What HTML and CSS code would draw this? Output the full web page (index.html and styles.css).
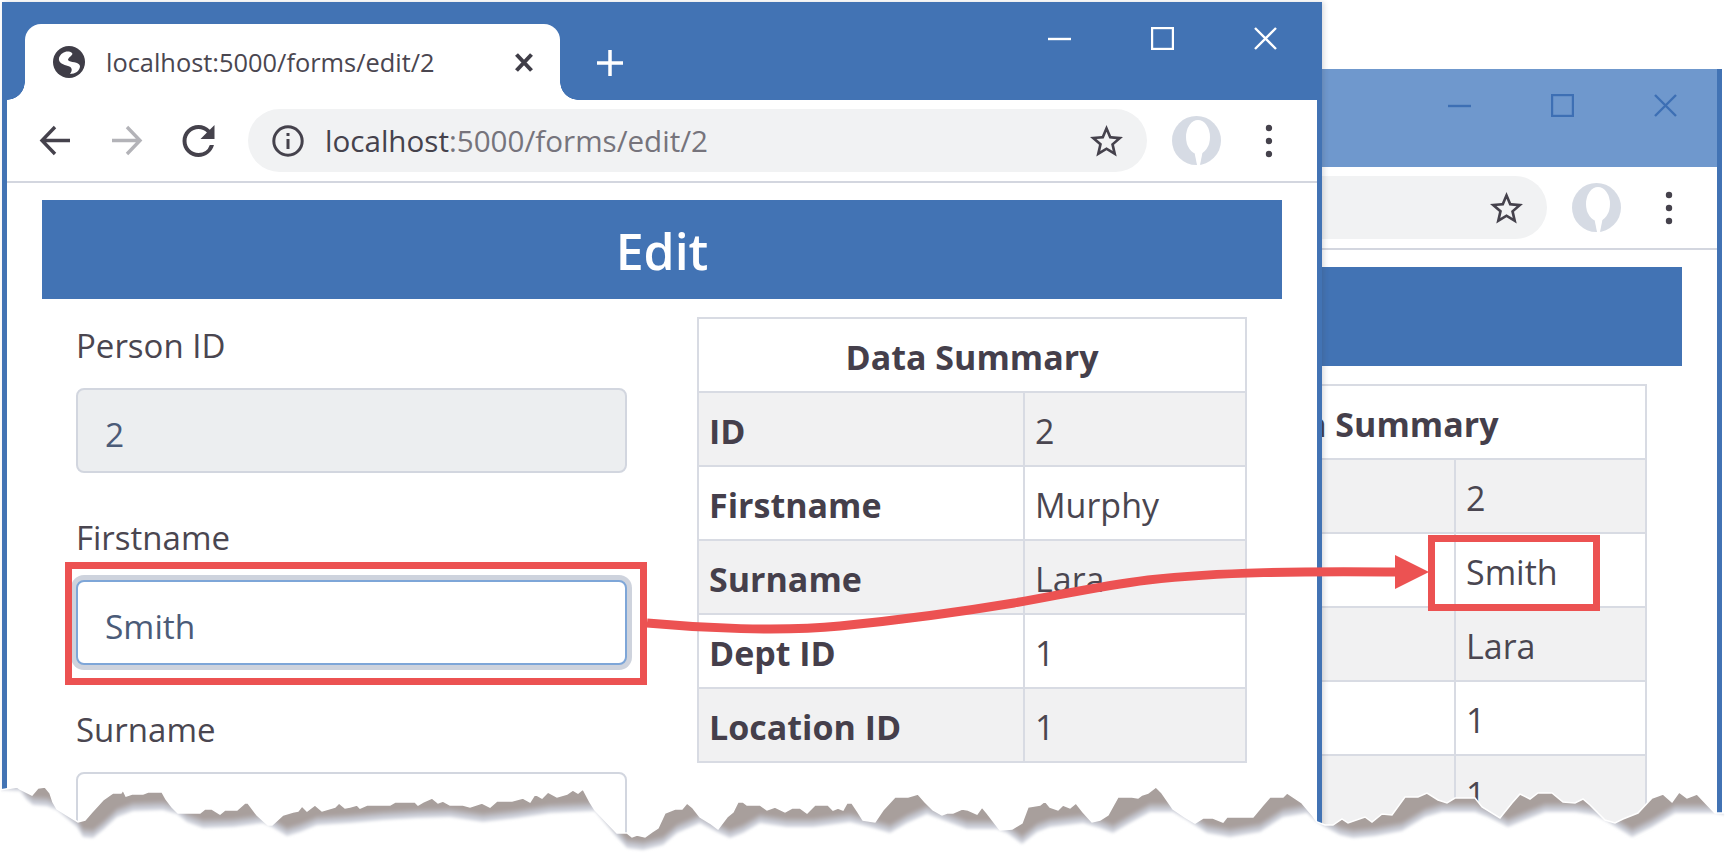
FILE: index.html
```html
<!DOCTYPE html>
<html lang="en">

<head>
	<meta charset="UTF-8">
	<title>localhost:5000/forms/edit/2</title>
	<link rel="stylesheet" href="styles.css">
</head>

<body>
	<svg class="icon-defs">
		<symbol id="i-min" viewBox="0 0 23 23"><path d="M0 12H23" /></symbol>
		<symbol id="i-max" viewBox="0 0 23 23"><rect x="1" y="1" width="21" height="21" /></symbol>
		<symbol id="i-close" viewBox="0 0 23 23"><path d="M1 1L22 22M22 1L1 22" /></symbol>
		<symbol id="i-star" viewBox="2 2 20 19.3"><path d="M22 9.24l-7.19-.62L12 2 9.19 8.63 2 9.24l5.46 4.73L5.82 21 12 17.27 18.18 21l-1.63-7.03L22 9.24zM12 15.4l-3.76 2.27 1-4.28-3.32-2.88 4.38-.38L12 6.1l1.71 4.04 4.38.38-3.32 2.88 1 4.28L12 15.4z" /></symbol>
		<symbol id="i-avatar" viewBox="0 0 49 49">
			<circle cx="24.5" cy="24.5" r="24.5" fill="#d6dbe4" />
			<ellipse cx="26" cy="21" rx="12" ry="17" fill="#fff" />
			<path d="M22 34H31L28 49H25Z" fill="#fff" />
		</symbol>
		<symbol id="i-dots" viewBox="0 0 8 34">
			<circle cx="4" cy="4" r="3.2" />
			<circle cx="4" cy="17" r="3.2" />
			<circle cx="4" cy="30" r="3.2" />
		</symbol>
	</svg>

	<!-- back window -->
	<div class="window window-back">
		<div class="titlebar">
			<div class="controls">
				<svg class="ctl"><use href="#i-min" /></svg>
				<svg class="ctl"><use href="#i-max" /></svg>
				<svg class="ctl"><use href="#i-close" /></svg>
			</div>
		</div>
		<div class="toolbar">
			<div class="omnibox"><svg class="star"><use href="#i-star" /></svg></div>
			<svg class="avatar"><use href="#i-avatar" /></svg>
			<svg class="dots"><use href="#i-dots" /></svg>
		</div>
		<div class="banner"></div>
		<div class="content">
			<table class="summary">
				<colgroup><col class="col-wide"><col></colgroup>
				<tr><th colspan="2" class="title">Data Summary</th></tr>
				<tr class="odd"><th></th><td>2</td></tr>
				<tr><th></th><td>Smith</td></tr>
				<tr class="odd"><th></th><td>Lara</td></tr>
				<tr><th></th><td>1</td></tr>
				<tr class="odd"><th></th><td>1</td></tr>
			</table>
		</div>
	</div>

	<!-- front window -->
	<div class="window window-front">
		<div class="titlebar">
			<div class="tab">
				<svg class="globe" viewBox="0 0 32 32">
					<circle cx="16" cy="16" r="16" fill="#3f3d47" />
					<path d="M6 12C8 6 15 4 19 7C21 9 15 11 15 14C17 17 26 15 27 20C27 25 22 28 17 28C20 24 19 21 15 20C11 19 5 17 6 12Z" fill="#fff" />
				</svg>
				<span class="tab-title">localhost:5000/forms/edit/2</span>
				<svg class="tab-close" viewBox="0 0 18 19"><path d="M1.5 1.5L16.5 17.5M16.5 1.5L1.5 17.5" /></svg>
			</div>
			<svg class="new-tab" viewBox="0 0 26 26"><path d="M13 0V26M0 13H26" /></svg>
			<div class="controls">
				<svg class="ctl"><use href="#i-min" /></svg>
				<svg class="ctl"><use href="#i-max" /></svg>
				<svg class="ctl"><use href="#i-close" /></svg>
			</div>
		</div>
		<div class="toolbar">
			<svg class="nav" viewBox="0 0 31 31"><path d="M31 15.5H4M16 2L3 15.5L16 29" /></svg>
			<svg class="nav nav-off" viewBox="0 0 31 31"><path d="M0 15.5H27M15 2L28 15.5L15 29" /></svg>
			<svg class="reload" viewBox="4 4 16 16"><path d="M17.65 6.35A7.958 7.958 0 0 0 12 4c-4.42 0-7.99 3.58-7.99 8s3.57 8 7.99 8c3.73 0 6.84-2.55 7.73-6h-2.08A5.99 5.99 0 0 1 12 18c-3.31 0-6-2.69-6-6s2.69-6 6-6c1.66 0 3.14.69 4.22 1.78L13 11h7V4l-2.35 2.35z" /></svg>
			<div class="omnibox">
				<svg class="info" viewBox="0 0 32 32">
					<circle cx="16" cy="16" r="14.2" />
					<path d="M16 14V24M16 8V11" />
				</svg>
				<span class="url"><b>localhost</b>:5000/forms/edit/2</span>
				<svg class="star"><use href="#i-star" /></svg>
			</div>
			<svg class="avatar"><use href="#i-avatar" /></svg>
			<svg class="dots"><use href="#i-dots" /></svg>
		</div>
		<div class="banner">Edit</div>
		<div class="content">
			<form class="edit-form">
				<label for="pid">Person ID</label>
				<input id="pid" type="text" value="2" disabled>
				<label for="fname">Firstname</label>
				<input id="fname" class="focused" type="text" value="Smith">
				<label for="sname">Surname</label>
				<input id="sname" type="text">
			</form>
			<table class="summary">
				<colgroup><col class="col-narrow"><col></colgroup>
				<tr><th colspan="2" class="title">Data Summary</th></tr>
				<tr class="odd"><th>ID</th><td>2</td></tr>
				<tr><th>Firstname</th><td>Murphy</td></tr>
				<tr class="odd"><th>Surname</th><td>Lara</td></tr>
				<tr><th>Dept ID</th><td>1</td></tr>
				<tr class="odd"><th>Location ID</th><td>1</td></tr>
			</table>
		</div>
	</div>

	<!-- torn edge and red callouts sit over both windows -->
	<svg class="overlay" viewBox="0 0 1725 859">
		<defs>
			<polygon id="tear" points="0,790 17,787 20,789 32,795 38,788 45,787 50,793 53,802 57,809 78,822 85,820 92,812 103,800 113,793 121,793 123,790 126,796 132,794 143,794 148,792 162,792 166,799 172,807 178,813 185,813 190,813 200,813 205,809 212,809 220,814 225,810 237,810 245,803 248,803 257,815 268,825 272,825 283,815 293,812 298,811 302,806 307,811 315,805 322,811 335,807 339,803 345,808 350,807 357,805 360,808 367,805 390,805 395,802 415,802 418,805 423,802 432,798 438,803 443,801 450,805 463,805 470,807 482,803 490,807 497,801 512,801 523,798 530,802 535,794 542,798 548,792 557,797 567,794 573,790 578,793 583,789 590,802 595,810 617,833 627,833 632,837 637,835 645,837 652,832 658,828 665,813 675,809 682,809 687,803 693,808 700,817 710,823 718,829 727,817 733,812 738,802 743,802 747,805 760,805 767,810 775,807 785,812 792,808 800,808 807,813 815,805 828,805 833,810 838,808 843,810 847,803 852,803 858,812 863,820 875,822 883,810 895,797 908,797 918,794 925,802 933,810 942,815 947,813 953,813 962,809 968,810 977,814 982,807 987,813 1000,830 1012,829 1022,823 1028,807 1040,805 1045,801 1050,807 1058,810 1063,805 1070,808 1076,803 1083,812 1092,822 1100,820 1108,815 1118,797 1132,797 1138,798 1142,795 1148,793 1156,787 1162,793 1173,809 1185,817 1195,823 1203,818 1213,818 1223,822 1227,817 1253,817 1263,805 1270,797 1283,797 1287,793 1302,803 1313,816 1317,822 1325,825 1333,825 1342,819 1348,823 1365,817 1372,822 1382,814 1392,815 1405,797 1418,797 1427,793 1438,800 1447,803 1455,798 1475,798 1482,807 1500,818 1512,803 1520,794 1530,799 1538,793 1552,793 1563,802 1575,803 1583,799 1590,805 1605,820 1615,823 1623,819 1638,813 1652,798 1663,794 1672,802 1679,792 1687,798 1697,794 1715,813 1725,813 1725,859 0,859" />
			<polygon id="shade" points="0,790 20,791 27,800 33,805 47,806 57,810 77,827 83,837 93,838 103,830 117,817 133,811 163,810 177,814 187,822 203,828 233,827 263,823 272,827 287,836 300,832 317,825 350,823 383,820 417,818 450,817 483,822 517,818 550,813 595,811 615,835 627,848 643,850 663,845 677,833 700,823 717,832 730,838 743,833 760,823 787,827 813,827 850,822 870,827 890,833 907,823 927,814 943,820 967,829 997,829 1007,833 1022,844 1037,832 1050,827 1083,823 1100,828 1113,833 1130,823 1150,812 1173,812 1187,820 1207,833 1230,837 1260,832 1283,817 1307,813 1317,822 1325,827 1340,835 1353,838 1375,836 1402,831 1425,817 1442,812 1475,812 1488,817 1508,827 1525,820 1545,812 1575,812 1595,815 1608,822 1632,837 1652,827 1675,813 1715,813 1725,815 1725,0 0,0" />
			<clipPath id="below-tear"><use href="#tear" /></clipPath>
			<filter id="soft"><feGaussianBlur stdDeviation="1.6" /></filter>
		</defs>
		<use href="#tear" class="paper" />
		<g clip-path="url(#below-tear)">
			<g filter="url(#soft)">
				<use href="#shade" class="shade-1" />
				<use href="#shade" class="shade-2" transform="translate(0 -3)" />
				<use href="#shade" class="shade-3" transform="translate(0 -6)" />
				<use href="#shade" class="shade-4" transform="translate(0 -9)" />
			</g>
		</g>
		<use href="#tear" class="tear-edge" />
		<rect class="callout" x="68.5" y="565.5" width="575" height="116" />
		<rect class="callout" x="1431.5" y="538.5" width="165" height="69" />
		<path class="callout callout-line" d="M647 623C700 628 780 632 840 626C900 620 960 612 1014 603C1060 595 1100 586 1148 580C1220 572 1300 571 1400 572" />
		<polygon class="callout-head" points="1395,555 1429,572 1395,589" />
	</svg>
</body>

</html>
```

FILE: styles.css
```css
* {
	margin: 0;
	padding: 0;
	box-sizing: border-box;
}

body {
	position: relative;
	width: 1725px;
	height: 859px;
	overflow: hidden;
	background: #fff;
	font-family: "Open Sans", "Noto Sans", sans-serif;
	color: #4a4650;
}

.icon-defs {
	position: absolute;
	width: 0;
	height: 0;
}

/* windows */
.window {
	position: absolute;
	width: 1320px;
	background: #fff;
	border-left: 5px solid #4273b4;
	border-right: 5px solid #4273b4;
}

.window-front {
	left: 2px;
	top: 2px;
	height: 857px;
	box-shadow: 2px 0 5px rgba(60, 60, 70, 0.18);
}

.window-back {
	left: 402px;
	top: 69px;
	height: 790px;
}

.titlebar {
	display: flex;
	height: 98px;
	background: #4273b4;
	color: #fff;
}

.window-back .titlebar {
	background: #6f98cd;
	color: #3d6fb4;
}

.tab {
	position: relative;
	display: flex;
	align-items: center;
	width: 535px;
	height: 76px;
	margin: 22px 0 0 18px;
	padding: 0 27px 0 28px;
	background: #fff;
	border-radius: 16px 16px 0 0;
	color: #4a4650;
}

.tab::before,
.tab::after {
	content: "";
	position: absolute;
	bottom: 0;
	width: 18px;
	height: 18px;
	background: radial-gradient(circle at 0 0, transparent 17.5px, #fff 18px);
}

.tab::before {
	left: -18px;
}

.tab::after {
	right: -18px;
	transform: scaleX(-1);
}

.globe {
	width: 32px;
	height: 32px;
	flex: none;
}

.tab-title {
	margin-left: 21px;
	font-size: 25.4px;
	white-space: nowrap;
}

.tab-close {
	width: 18px;
	height: 19px;
	margin-left: auto;
	fill: none;
	stroke: #3f3d47;
	stroke-width: 4;
}

.new-tab {
	width: 26px;
	height: 26px;
	margin: 48px 0 0 37px;
	fill: none;
	stroke: #fff;
	stroke-width: 3.5;
}

.controls {
	display: flex;
	gap: 80px;
	margin: 25px 40px 0 auto;
}

.ctl {
	width: 23px;
	height: 23px;
	fill: none;
	stroke: currentColor;
	stroke-width: 2.4;
}

/* toolbar */
.toolbar {
	display: flex;
	align-items: center;
	height: 83px;
	padding-left: 32px;
	border-bottom: 2px solid #d3d6df;
}

.nav {
	width: 31px;
	height: 31px;
	margin-right: 42px;
	fill: none;
	stroke: #45424c;
	stroke-width: 3.4;
}

.nav-off {
	margin-right: 39px;
	stroke: #b3b3b8;
}

.reload {
	width: 33px;
	height: 32px;
	margin-right: 33px;
	fill: #45424c;
}

.omnibox {
	display: flex;
	align-items: center;
	width: 899px;
	height: 63px;
	padding: 0 24px;
	background: #f1f2f3;
	border-radius: 32px;
}

.window-back .omnibox {
	margin-left: 209px;
}

.info {
	width: 32px;
	height: 32px;
	fill: none;
	stroke: #45424c;
	stroke-width: 3;
}

.url {
	margin-left: 21px;
	font-size: 29.6px;
	color: #76747c;
	white-space: nowrap;
}

.url b {
	font-weight: 400;
	color: #45424c;
}

.star {
	width: 33px;
	height: 32px;
	margin-left: auto;
	fill: #45424c;
}

.avatar {
	width: 49px;
	height: 49px;
	margin-left: 25px;
}

.dots {
	width: 8px;
	height: 34px;
	margin-left: 44px;
	fill: #45424c;
}

/* page */
.banner {
	display: flex;
	justify-content: center;
	align-items: center;
	width: 1240px;
	height: 99px;
	margin: 17px 0 0 35px;
	padding-top: 3px;
	background: #4273b4;
	color: #fff;
	font-size: 50px;
	font-weight: 600;
}

.content {
	display: grid;
	grid-template-columns: 551px 550px;
	column-gap: 70px;
	padding: 18px 35px 0 69px;
}

.edit-form {
	margin-top: 4px;
}

.edit-form label {
	display: block;
	height: 50px;
	margin-bottom: 17px;
	font-size: 33px;
	line-height: 50px;
}

.edit-form input {
	display: block;
	width: 551px;
	height: 85px;
	margin-bottom: 40px;
	padding: 6px 0 0 27px;
	border: 2px solid #d2d6df;
	border-radius: 8px;
	background: #fff;
	font: inherit;
	font-size: 33.5px;
	color: #4b5b78;
	outline: none;
}

.edit-form input:disabled {
	background: #eceef0;
	opacity: 1;
}

.edit-form .focused {
	border-color: #7ea6d8;
	box-shadow: 0 0 0 5px #ced3dd;
}

.summary {
	grid-column: 2;
	width: 550px;
	height: 445px;
	border-collapse: collapse;
	table-layout: fixed;
	font-size: 34px;
}

.col-narrow {
	width: 326px;
}

.col-wide {
	width: 357px;
}

.summary th,
.summary td {
	height: 74px;
	padding: 3px 10px 0;
	border: 2px solid #d8dbe3;
	text-align: left;
	white-space: nowrap;
}

.summary th {
	font-weight: 700;
	color: #453f4b;
}

.summary .title {
	text-align: center;
}

.summary .odd {
	background: #f1f1f2;
}

/* annotation layer */
.overlay {
	position: absolute;
	left: 0;
	top: 0;
	width: 1725px;
	height: 859px;
}

.paper {
	fill: #fff;
}

.shade-1 {
	fill: #d3d6df;
}

.shade-2 {
	fill: #c2c3cb;
}

.shade-3 {
	fill: #b3aeb0;
}

.shade-4 {
	fill: #a89f9c;
}

.tear-edge {
	fill: none;
	stroke: #fff;
	stroke-width: 1.5;
}

.callout {
	fill: none;
	stroke: #ec5252;
	stroke-width: 7;
}

.callout-line {
	stroke-width: 9;
}

.callout-head {
	fill: #ec5252;
}
```
